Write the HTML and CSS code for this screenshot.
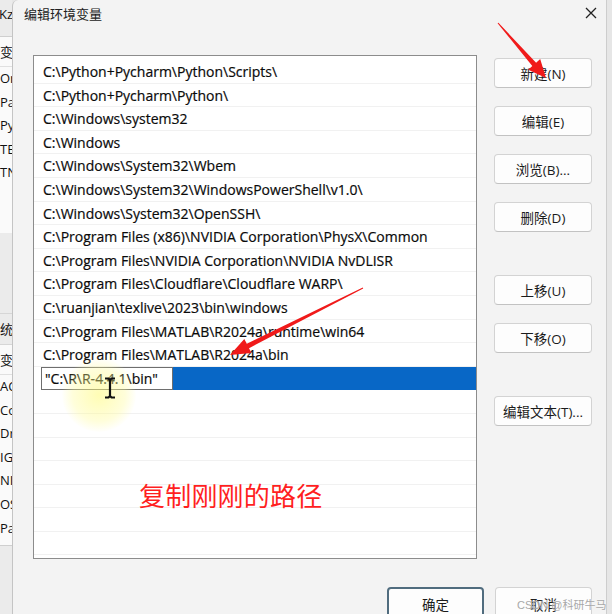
FILE: index.html
```html
<!DOCTYPE html>
<html lang="zh-CN">
<head>
<meta charset="utf-8">
<title>编辑环境变量</title>
<link rel="stylesheet" href="styles.css">
</head>
<body>
<div class="page">
  <div class="bgwin">
    <div class="bg-head">Kz</div>
    <div class="bg-list">
      <div class="bg-row bg-hdr">变</div>
      <div class="bg-row">Or</div>
      <div class="bg-row">Pa</div>
      <div class="bg-row">Py</div>
      <div class="bg-row">TE</div>
      <div class="bg-row">TN</div>
    </div>
    <div class="bg-gap"></div>
    <div class="bg-label">统</div>
    <div class="bg-list bg-list2">
      <div class="bg-row bg-hdr">变</div>
      <div class="bg-row">AC</div>
      <div class="bg-row">Co</div>
      <div class="bg-row">Dr</div>
      <div class="bg-row">IG</div>
      <div class="bg-row">NI</div>
      <div class="bg-row">OS</div>
      <div class="bg-row">Pa</div>
    </div>
  </div>

  <div class="dialog">
    <div class="titlebar">
      <span class="title">编辑环境变量</span>
      <svg class="close" width="12" height="12" viewBox="0 0 12 12"><path d="M1 1 L11 11 M11 1 L1 11" stroke="#222" stroke-width="1.3" fill="none"/></svg>
    </div>
    <div class="main">
      <div class="list">
        <div class="row">C:\Python+Pycharm\Python\Scripts\</div>
        <div class="row">C:\Python+Pycharm\Python\</div>
        <div class="row">C:\Windows\system32</div>
        <div class="row">C:\Windows</div>
        <div class="row">C:\Windows\System32\Wbem</div>
        <div class="row">C:\Windows\System32\WindowsPowerShell\v1.0\</div>
        <div class="row">C:\Windows\System32\OpenSSH\</div>
        <div class="row">C:\Program Files (x86)\NVIDIA Corporation\PhysX\Common</div>
        <div class="row">C:\Program Files\NVIDIA Corporation\NVIDIA NvDLISR</div>
        <div class="row">C:\Program Files\Cloudflare\Cloudflare WARP\</div>
        <div class="row">C:\ruanjian\texlive\2023\bin\windows</div>
        <div class="row">C:\Program Files\MATLAB\R2024a\runtime\win64</div>
        <div class="row">C:\Program Files\MATLAB\R2024a\bin</div>
        <div class="row row-edit"><span class="editbox">"C:\R\R-4.4.1\bin"</span><span class="selfill"></span></div>
        <div class="row"></div>
        <div class="row"></div>
        <div class="row"></div>
        <div class="row"></div>
        <div class="row"></div>
        <div class="row"></div>
        <div class="row"></div>
      </div>
      <div class="side">
        <button class="btn">新建(N)</button>
        <button class="btn">编辑(E)</button>
        <button class="btn">浏览(B)...</button>
        <button class="btn">删除(D)</button>
        <button class="btn btn-sep">上移(U)</button>
        <button class="btn">下移(O)</button>
        <button class="btn btn-sep">编辑文本(T)...</button>
      </div>
    </div>
    <div class="footer">
      <button class="btn btn-foot btn-default">确定</button>
      <button class="btn btn-foot">取消</button>
    </div>
  </div>
</div>

<div class="glow"></div>
<svg class="ibeam" width="14" height="22" viewBox="0 0 14 22">
  <path d="M2 1.5 H5.5 L7 3 L8.5 1.5 H12 M7 3 V19 M2 20.5 H5.5 L7 19 L8.5 20.5 H12" stroke="#111" stroke-width="2.2" fill="none"/>
</svg>
<svg class="arrows" width="612" height="614" viewBox="0 0 612 614">
  <polygon fill="#f01a1a" points="497.6,23.3 532.3,66.0 528.2,69.7 546,78 540.2,59.1 536.1,62.8 498.4,22.7"/>
  <polygon fill="#f01a1a" points="363.2,288.5 249.0,348.2 251.5,353.1 230,355 244.3,338.9 246.8,343.8 362.8,287.6"/>
</svg>
<div class="note">复制刚刚的路径</div>
<div class="watermark">CSDN @科研牛马</div>
</body>
</html>
```
FILE: styles.css
```css
html, body {
  margin: 0;
  padding: 0;
}
body {
  width: 612px;
  height: 614px;
  overflow: hidden;
  position: relative;
  background: #e6e6e6;
  font-family: "Open Sans", "Noto Sans CJK SC", sans-serif;
  color: #111;
}
.page {
  display: flex;
  height: 614px;
  overflow: hidden;
}

/* background window strip */
.bgwin {
  width: 12px;
  flex: none;
  overflow: hidden;
  background: #ebebeb;
  font-size: 13px;
  white-space: nowrap;
}
.bg-head {
  height: 36px;
  line-height: 28px;
  border-bottom: 1px solid #cfcfcf;
  margin-left: -1px;
}
.bg-list {
  background: #fafafa;
  height: 196px;
}
.bg-row {
  height: 23.6px;
  line-height: 23.6px;
}
.bg-hdr {
  height: 29px;
  line-height: 29px;
  border-bottom: 1px solid #e0e0e0;
  font-family: "Noto Sans CJK SC", sans-serif;
}
.bg-gap {
  height: 80px;
  border-bottom: 1px solid #d6d6d6;
}
.bg-label {
  height: 30px;
  line-height: 30px;
  font-family: "Noto Sans CJK SC", sans-serif;
  border-bottom: 1px solid #d6d6d6;
}
.bg-list2 {
  height: 200px;
  border-bottom: 1px solid #cfcfcf;
}

/* dialog */
.dialog {
  width: 593px;
  height: 614px;
  flex: none;
  overflow: hidden;
  background: #f3f3f3;
  border-left: 1px solid #c4c4c4;
  border-right: 1px solid #cdcdcd;
  border-top-left-radius: 6px;
  display: flex;
  flex-direction: column;
}
.dialog > * {
  flex: none;
}
.titlebar {
  height: 26px;
  margin-bottom: 2px;
  display: flex;
  align-items: center;
  justify-content: space-between;
  padding: 0 9px 0 11px;
}
.title {
  font-family: "Noto Sans CJK SC", sans-serif;
  font-size: 13px;
  color: #222;
}
.close {
  display: block;
}
.main {
  display: flex;
  gap: 17px;
  padding: 27px 0 0 20px;
}
.list {
  width: 442px;
  height: 498px;
  border: 1px solid #8c8c8c;
  background: #fff;
  padding-top: 4px;
  box-sizing: content-box;
  overflow: hidden;
  flex: none;
}
.row {
  height: 23.6px;
  line-height: 23px;
  box-sizing: border-box;
  border-bottom: 1px solid #f1f1f1;
  padding-left: 9px;
  font-size: 14px;
  color: #0a0a0a;
  -webkit-text-stroke: 0.2px #0a0a0a;
  white-space: nowrap;
}
.row-edit {
  display: flex;
  padding-left: 7px;
  border-bottom: none;
}
.editbox {
  width: 132px;
  flex: none;
  box-sizing: border-box;
  border: 1px solid #6e6e6e;
  background: #fff;
  padding-left: 3px;
  line-height: 21px;
  height: 23px;
}
.selfill {
  flex: 1;
  height: 23px;
  background: #0867c6;
}
.side {
  display: flex;
  flex-direction: column;
  gap: 18px;
  padding-top: 3px;
}
.btn {
  width: 98px;
  height: 30px;
  box-sizing: border-box;
  border: 1px solid #d3d3d3;
  border-bottom-color: #c2c2c2;
  border-radius: 4px;
  background: #fdfdfd;
  font-family: "Open Sans", "Noto Sans CJK SC", sans-serif;
  font-size: 13.5px;
  color: #1b1b1b;
  padding: 0;
}
.btn-sep {
  margin-top: 25px;
}
.footer {
  display: flex;
  justify-content: flex-end;
  gap: 11px;
  padding: 0 14px 0 0;
  margin-top: 28px;
}
.btn-foot {
  width: 97px;
  height: 34px;
  flex: none;
}
.btn-default {
  border: 2px solid #506c7e;
}

/* overlays from the screen recording */
.glow {
  position: absolute;
  left: 62px;
  top: 358px;
  width: 74px;
  height: 74px;
  border-radius: 50%;
  background: radial-gradient(circle, rgba(255, 250, 120, 0.55) 0%, rgba(255, 252, 150, 0.35) 50%, rgba(255, 255, 200, 0) 72%);
  pointer-events: none;
}
.ibeam {
  position: absolute;
  left: 103px;
  top: 377px;
}
.arrows {
  position: absolute;
  left: 0;
  top: 0;
}
.note {
  position: absolute;
  left: 139px;
  top: 478px;
  font-family: "Noto Sans CJK SC", sans-serif;
  font-size: 26px;
  line-height: 34px;
  color: #ff1f1f;
  letter-spacing: 0.2px;
}
.watermark {
  position: absolute;
  left: 517px;
  top: 596px;
  font-family: "Liberation Sans", "Noto Sans CJK SC", sans-serif;
  font-size: 11px;
  line-height: 18px;
  color: #a8a8a8;
  text-shadow: 0 0 2px #fff;
  white-space: nowrap;
}
```
